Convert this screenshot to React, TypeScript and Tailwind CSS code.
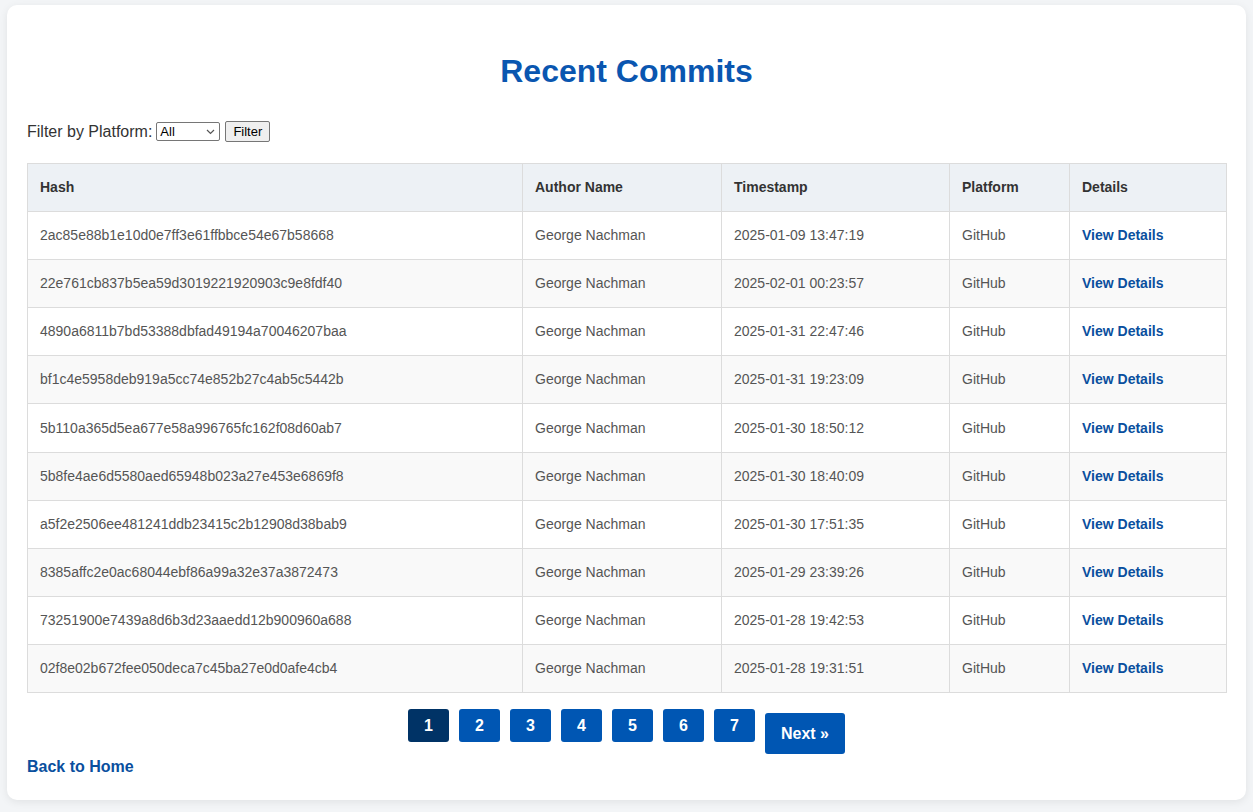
import React from "react";

const commits = [
  ["2ac85e88b1e10d0e7ff3e61ffbbce54e67b58668", "2025-01-09 13:47:19"],
  ["22e761cb837b5ea59d3019221920903c9e8fdf40", "2025-02-01 00:23:57"],
  ["4890a6811b7bd53388dbfad49194a70046207baa", "2025-01-31 22:47:46"],
  ["bf1c4e5958deb919a5cc74e852b27c4ab5c5442b", "2025-01-31 19:23:09"],
  ["5b110a365d5ea677e58a996765fc162f08d60ab7", "2025-01-30 18:50:12"],
  ["5b8fe4ae6d5580aed65948b023a27e453e6869f8", "2025-01-30 18:40:09"],
  ["a5f2e2506ee481241ddb23415c2b12908d38bab9", "2025-01-30 17:51:35"],
  ["8385affc2e0ac68044ebf86a99a32e37a3872473", "2025-01-29 23:39:26"],
  ["73251900e7439a8d6b3d23aaedd12b900960a688", "2025-01-28 19:42:53"],
  ["02f8e02b672fee050deca7c45ba27e0d0afe4cb4", "2025-01-28 19:31:51"],
];

export default function App() {
  return (
    <div className="min-h-[812px] bg-[#f3f5f7] pt-[5px] px-[7px] font-['Liberation_Sans',Arial,sans-serif]">
      <div className="bg-white rounded-[10px] shadow-[0_2px_8px_rgba(0,0,0,0.08)] pt-[48px] px-5 pb-[25px] h-[795px]">
        <h1 className="text-center text-[32px] leading-[37px] font-bold text-[#0a56b0]">
          Recent Commits
        </h1>

        <div className="mt-[31px] flex items-center h-[21px] text-[16px] text-[#333]">
          <span>Filter by Platform:</span>
          <div className="ml-[4px] relative w-[64px] h-[19px] border border-[#767676] rounded-[2px] bg-white flex items-center px-[3px] text-[13px] text-black">
            All
            <svg className="absolute right-[4px] top-[6px]" width="9" height="6" viewBox="0 0 9 6">
              <path d="M1 1 L4.5 4.5 L8 1" stroke="#555" strokeWidth="1.2" fill="none" />
            </svg>
          </div>
          <button className="ml-[5px] h-[21px] w-[45px] border border-[#767676] rounded-[2px] bg-[#efefef] text-[13px] text-black leading-none">
            Filter
          </button>
        </div>

        <table className="mt-[21px] w-full table-fixed border-collapse text-[14px]">
          <colgroup>
            <col className="w-[495px]" />
            <col className="w-[199px]" />
            <col className="w-[228px]" />
            <col className="w-[120px]" />
            <col className="w-[157px]" />
          </colgroup>
          <thead>
            <tr className="h-[48.1px] bg-[#edf1f5]">
              {["Hash", "Author Name", "Timestamp", "Platform", "Details"].map((h) => (
                <th key={h} className="border border-[#dcdcdc] px-3 py-0 text-left font-bold text-[#333]">
                  {h}
                </th>
              ))}
            </tr>
          </thead>
          <tbody>
            {commits.map(([hash, ts], i) => (
              <tr key={hash} className={`h-[48.1px] ${i % 2 === 1 ? "bg-[#f9f9f9]" : "bg-white"}`}>
                <td className="border border-[#dcdcdc] px-3 py-0 text-[#555]">{hash}</td>
                <td className="border border-[#dcdcdc] px-3 py-0 text-[#555]">George Nachman</td>
                <td className="border border-[#dcdcdc] px-3 py-0 text-[#555]">{ts}</td>
                <td className="border border-[#dcdcdc] px-3 py-0 text-[#555]">GitHub</td>
                <td className="border border-[#dcdcdc] px-3 py-0">
                  <a className="font-bold text-[#0a4f9e]">View Details</a>
                </td>
              </tr>
            ))}
          </tbody>
        </table>

        <div className="mt-[16px] flex justify-center items-start gap-[10px]">
          {[1, 2, 3, 4, 5, 6, 7].map((n) => (
            <a
              key={n}
              className={`w-[41px] h-[33px] rounded-[3px] flex items-center justify-center text-white font-bold text-[16px] ${
                n === 1 ? "bg-[#003366]" : "bg-[#0056b3]"
              }`}
            >
              {n}
            </a>
          ))}
          <a className="mt-[4px] w-[80px] h-[41px] rounded-[3px] flex items-center justify-center text-white font-bold text-[16px] bg-[#0056b3]">
            Next »
          </a>
        </div>

        <a className="block mt-[4px] text-[16px] leading-[18px] font-bold text-[#0a4f9e]">Back to Home</a>
      </div>
    </div>
  );
}
